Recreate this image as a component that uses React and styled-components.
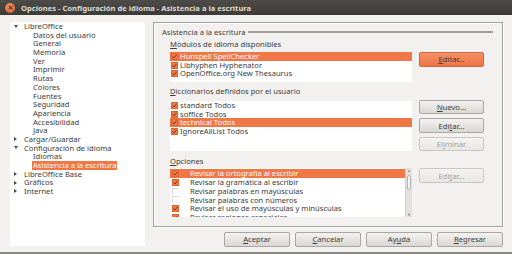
import React from "react";
import styled, { createGlobalStyle } from "styled-components";

const GlobalStyle = createGlobalStyle`
  html, body {
    margin: 0;
    padding: 0;
  }
  body {
    width: 512px;
    height: 254px;
    overflow: hidden;
    background: #f2f1f0;
    font-family: "Noto Sans", "DejaVu Sans", sans-serif;
    color: #3c3c3c;
  }
`;

const Window = styled.div`
  width: 512px;
  height: 254px;
  box-sizing: border-box;
  display: flex;
  flex-direction: column;
  background: #f2f1f0;
  border-bottom: 2px solid #8a8883;
`;

const TitleBar = styled.div`
  height: 15px;
  flex: none;
  display: flex;
  align-items: center;
  gap: 6px;
  padding-left: 5px;
  background: linear-gradient(#4d4c48, #3c3b37);
  color: #dfdbd2;
  font-weight: bold;
  font-size: 7.6px;
  white-space: nowrap;
`;

const CloseBtn = styled.span`
  width: 10px;
  height: 10px;
  border-radius: 50%;
  background: radial-gradient(circle at 45% 35%, #f79a6c, #df4f1c);
  display: flex;
  align-items: center;
  justify-content: center;
`;

const Body = styled.div`
  flex: 1;
  display: flex;
  gap: 8px;
  padding: 7px 9px 0 10px;
  font-size: 7.6px;
`;

const Tree = styled.div`
  width: 135px;
  height: 224px;
  background: #fff;
  display: flex;
  flex-direction: column;
  white-space: nowrap;
`;

const TreeRow = styled.div`
  height: 8.7px;
  line-height: 8.7px;
  display: flex;
  align-items: center;
  padding-left: ${(p) => (p.$child ? 22 : 4)}px;
`;

const Expander = styled.span`
  width: 9px;
  display: flex;
  align-items: center;
  justify-content: flex-start;
  &::before {
    content: "";
    display: block;
    border-style: solid;
    border-color: transparent;
    ${(p) =>
      p.$open
        ? "border-width: 3px 2.5px 0 2.5px; border-top-color: #4a4a4a;"
        : "border-width: 2.5px 0 2.5px 3px; border-left-color: #4a4a4a;"}
  }
`;

const TreeLabel = styled.span`
  padding: 0 1px;
  background: ${(p) => (p.$selected ? "#f07746" : "transparent")};
  color: ${(p) => (p.$selected ? "#fff" : "#3c3c3c")};
`;

const RightCol = styled.div`
  width: 350px;
  display: flex;
  flex-direction: column;
  gap: 5px;
`;

const Frame = styled.div`
  height: 205px;
  box-sizing: border-box;
  border: 1px solid #a4a29d;
  box-shadow: inset 1px 1px 0 #fff, 1px 1px 0 #fff;
  padding: 4.5px 9px 0 8px;
  display: flex;
  flex-direction: column;
`;

const FrameTitle = styled.div`
  height: 9px;
  line-height: 9px;
  display: flex;
  align-items: center;
  gap: 3px;
  white-space: nowrap;
  &::after {
    content: "";
    flex: 1;
    height: 2px;
    background: #a09e99;
  }
`;

const Section = styled.div`
  margin-top: ${(p) => p.$top}px;
  padding-left: 8px;
  display: flex;
  flex-direction: column;
`;

const SectionLabel = styled.div`
  height: 9px;
  line-height: 9px;
  white-space: nowrap;
`;

const SectionRow = styled.div`
  margin-top: ${(p) => p.$top}px;
  display: grid;
  grid-template-columns: 242px 65px;
  column-gap: 7px;
  align-items: start;
`;

const List = styled.div`
  height: ${(p) => p.$h}px;
  background: #fff;
  display: flex;
  overflow: hidden;
`;

const ListBody = styled.div`
  flex: 1;
  padding-top: ${(p) => p.$pad || 0}px;
  display: flex;
  flex-direction: column;
  overflow: hidden;
`;

const ListRow = styled.div`
  flex: none;
  height: 8.7px;
  line-height: 8.7px;
  display: flex;
  align-items: center;
  white-space: nowrap;
  padding-left: ${(p) => (p.$wide ? 2 : 1)}px;
  background: ${(p) => (p.$selected ? "#f07746" : "transparent")};
  color: ${(p) => (p.$selected ? "#fff" : "#3c3c3c")};
`;

const CheckBox = styled.span`
  flex: none;
  width: 7px;
  height: 7px;
  box-sizing: border-box;
  margin-right: ${(p) => (p.$wide ? 11 : 2)}px;
  background: ${(p) => (p.$checked ? "#f07746" : "#fff")};
  border: 1px solid ${(p) => (p.$checked ? "#e0622f" : "#dcdad6")};
  border-right-color: ${(p) => (p.$checked ? "#e0622f" : "#fff")};
  border-bottom-color: ${(p) => (p.$checked ? "#e0622f" : "#fff")};
  display: flex;
  align-items: center;
  justify-content: center;
`;

const Scrollbar = styled.div`
  width: 6px;
  flex: none;
  background: #e4e2de;
  border-left: 1px solid #d2d0cc;
  display: flex;
  flex-direction: column;
  align-items: center;
  position: relative;
`;

const ScrollArrow = styled.span`
  height: 5px;
  display: flex;
  align-items: center;
  &::before {
    content: "";
    border-style: solid;
    border-color: transparent;
    ${(p) =>
      p.$up
        ? "border-width: 0 1.5px 2px 1.5px; border-bottom-color: #6b6a66;"
        : "border-width: 2px 1.5px 0 1.5px; border-top-color: #6b6a66;"}
  }
`;

const ScrollThumb = styled.span`
  width: 4px;
  height: 15px;
  margin-top: 2px;
  border: 1px solid #b4b2ad;
  border-radius: 2px;
  background: #f6f5f3;
  box-sizing: border-box;
`;

const ScrollSpacer = styled.span`
  flex: 1;
`;

const ButtonCol = styled.div`
  display: flex;
  flex-direction: column;
  gap: 4px;
  margin-top: ${(p) => p.$top || 0}px;
`;

const Button = styled.div`
  width: ${(p) => p.$w || 65}px;
  height: 14.5px;
  box-sizing: border-box;
  border: 1px solid ${(p) => (p.$hot ? "#c96a40" : p.$disabled ? "#c9c7c2" : "#a9a7a2")};
  border-radius: 2px;
  background: ${(p) =>
    p.$hot
      ? "linear-gradient(#f59167, #ee7443)"
      : p.$disabled
      ? "linear-gradient(#f4f3f1, #e9e7e4)"
      : "linear-gradient(#f3f2f0, #d9d7d3)"};
  color: ${(p) => (p.$disabled ? "#a3a19d" : "#3c3c3c")};
  display: flex;
  align-items: center;
  justify-content: center;
  white-space: nowrap;
`;

const Mn = styled.span`
  text-decoration: underline;
`;

const ButtonBar = styled.div`
  display: flex;
  justify-content: flex-end;
  gap: 5px;
`;

const Check = () => (
  <svg width="5" height="5" viewBox="0 0 5 5">
    <polyline points="0.5,2.5 2,4 4.5,0.8" fill="none" stroke="#7a3a22" strokeWidth="1" />
  </svg>
);

const treeItems = [
  { label: "LibreOffice", open: true },
  { label: "Datos del usuario", child: true },
  { label: "General", child: true },
  { label: "Memoria", child: true },
  { label: "Ver", child: true },
  { label: "Imprimir", child: true },
  { label: "Rutas", child: true },
  { label: "Colores", child: true },
  { label: "Fuentes", child: true },
  { label: "Seguridad", child: true },
  { label: "Apariencia", child: true },
  { label: "Accesibilidad", child: true },
  { label: "Java", child: true },
  { label: "Cargar/Guardar", open: false },
  { label: "Configuración de idioma", open: true },
  { label: "Idiomas", child: true },
  { label: "Asistencia a la escritura", child: true, selected: true },
  { label: "LibreOffice Base", open: false },
  { label: "Gráficos", open: false },
  { label: "Internet", open: false },
];

const modules = [
  { label: "Hunspell SpellChecker", checked: true, selected: true },
  { label: "Libhyphen Hyphenator", checked: true },
  { label: "OpenOffice.org New Thesaurus", checked: true },
];

const dictionaries = [
  { label: "standard Todos", checked: true },
  { label: "soffice Todos", checked: true },
  { label: "technical Todos", checked: true, selected: true },
  { label: "IgnoreAllList Todos", checked: true },
];

const options = [
  { label: "Revisar la ortografía al escribir", checked: true, selected: true },
  { label: "Revisar la gramática al escribir", checked: true },
  { label: "Revisar palabras en mayúsculas", checked: false },
  { label: "Revisar palabras con números", checked: false },
  { label: "Revisar el uso de mayúsculas y minúsculas", checked: true },
  { label: "Revisar regiones especiales", checked: true },
];

const CheckRows = ({ items, wide }) =>
  items.map((it) => (
    <ListRow key={it.label} $selected={it.selected} $wide={wide}>
      <CheckBox $checked={it.checked} $wide={wide}>
        {it.checked && <Check />}
      </CheckBox>
      {it.label}
    </ListRow>
  ));

const App = () => {
  return (
    <>
      <GlobalStyle />
      <Window>
        <TitleBar>
          <CloseBtn>
            <svg width="5" height="5" viewBox="0 0 5 5">
              <path d="M0.8 0.8 L4.2 4.2 M4.2 0.8 L0.8 4.2" stroke="#3c3b37" strokeWidth="1.2" />
            </svg>
          </CloseBtn>
          Opciones - Configuración de idioma - Asistencia a la escritura
        </TitleBar>
        <Body>
          <Tree>
            {treeItems.map((it) => (
              <TreeRow key={it.label} $child={it.child}>
                {!it.child && <Expander $open={it.open} />}
                <TreeLabel $selected={it.selected}>{it.label}</TreeLabel>
              </TreeRow>
            ))}
          </Tree>
          <RightCol>
            <Frame>
              <FrameTitle>Asistencia a la escritura</FrameTitle>
              <Section $top={3.5}>
                <SectionLabel>
                  <Mn>M</Mn>ódulos de idioma disponibles
                </SectionLabel>
                <SectionRow $top={3}>
                  <List $h={30}>
                    <ListBody>
                      <CheckRows items={modules} />
                    </ListBody>
                  </List>
                  <ButtonCol>
                    <Button $hot>
                      <Mn>E</Mn>ditar...
                    </Button>
                  </ButtonCol>
                </SectionRow>
              </Section>
              <Section $top={5.2}>
                <SectionLabel>
                  <Mn>D</Mn>iccionarios definidos por el usuario
                </SectionLabel>
                <SectionRow $top={4.8}>
                  <List $h={50}>
                    <ListBody>
                      <CheckRows items={dictionaries} />
                    </ListBody>
                  </List>
                  <ButtonCol $top={-1}>
                    <Button>
                      <Mn>N</Mn>uevo...
                    </Button>
                    <Button>
                      Edi<Mn>t</Mn>ar...
                    </Button>
                    <Button $disabled>
                      El<Mn>i</Mn>minar
                    </Button>
                  </ButtonCol>
                </SectionRow>
              </Section>
              <Section $top={5.2}>
                <SectionLabel>
                  <Mn>O</Mn>pciones
                </SectionLabel>
                <SectionRow $top={2.8}>
                  <List $h={49}>
                    <ListBody $pad={1}>
                      <CheckRows items={options} wide />
                    </ListBody>
                    <Scrollbar>
                      <ScrollArrow $up />
                      <ScrollThumb />
                      <ScrollSpacer />
                      <ScrollArrow />
                    </Scrollbar>
                  </List>
                  <ButtonCol>
                    <Button $disabled>
                      Edi<Mn>t</Mn>ar...
                    </Button>
                  </ButtonCol>
                </SectionRow>
              </Section>
            </Frame>
            <ButtonBar>
              <Button $w={66}>
                <Mn>A</Mn>ceptar
              </Button>
              <Button $w={66}>
                <Mn>C</Mn>ancelar
              </Button>
              <Button $w={66}>
                Ay<Mn>u</Mn>da
              </Button>
              <Button $w={66}>
                <Mn>R</Mn>egresar
              </Button>
            </ButtonBar>
          </RightCol>
        </Body>
      </Window>
    </>
  );
};

export default App;
